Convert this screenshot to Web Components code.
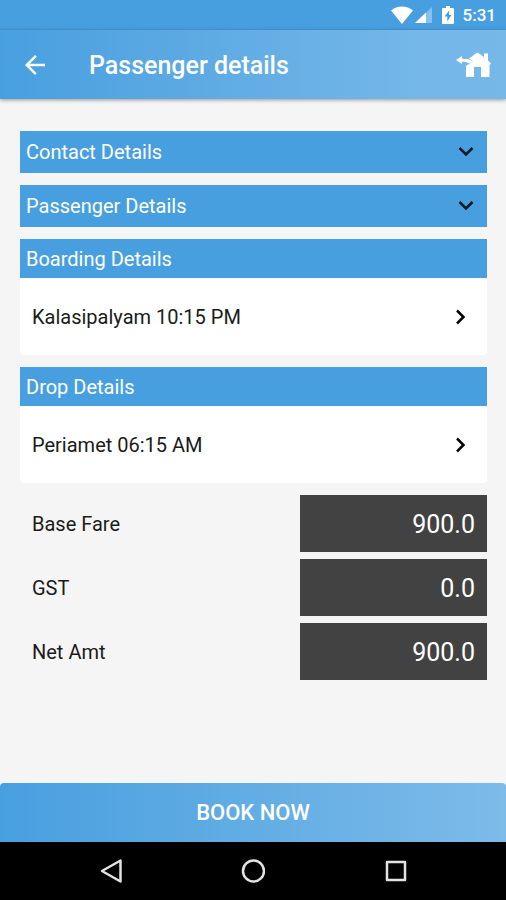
<!DOCTYPE html>
<html lang="en">
<head>
    <meta charset="UTF-8">
    <meta name="viewport" content="width=device-width, initial-scale=1.0">
    <title>Passenger details</title>
    <style>
        :root {
            --primary: #489fdf;
            --primary-light: #7dbbe9;
            --page: #f5f5f5;
            --dark: #424242;
        }

        body {
            margin: 0;
            font-family: Roboto, "Liberation Sans", sans-serif;
            font-size: 20px;
            line-height: 24px;
            color: #1b1b1b;
            background-color: var(--page);
        }
    </style>
</head>
<body>
    <booking-page></booking-page>

    <script>
        class StatusBar extends HTMLElement {

            constructor() {
                super();
                this.shadowDOM = this.attachShadow({mode: "open"});
            }

            connectedCallback() {
                this.render();
            }

            render() {
                this.shadowDOM.innerHTML = `
                <style>
                :host {
                    display: flex;
                    align-items: center;
                    justify-content: flex-end;
                    height: 30px;
                    padding: 0 10px;
                    background-color: var(--primary);
                    color: white;
                    font-size: 17px;
                    font-weight: 500;
                }

                svg {
                    display: block;
                    fill: white;
                }

                .battery {
                    margin: 0 9px 0 10px;
                }
                </style>

                <svg width="22" height="18" viewBox="0 0 22 18" aria-hidden="true">
                    <path d="M0 4.500C6 -.8 16 -.8 22 4.500L11 18z"/>
                </svg>
                <svg width="19" height="18" viewBox="0 0 19 18" aria-hidden="true">
                    <path d="M2 17L19 1v16z" opacity=".35"/>
                    <path d="M2 17L13 6.600V17z"/>
                </svg>
                <svg class="battery" width="12" height="18" viewBox="0 0 12 18" aria-hidden="true">
                    <path fill-rule="evenodd" d="M4 0h4v2h3q1 0 1 1v14q0 1-1 1H1q-1 0-1-1V3q0-1 1-1h3zM7 4.500L2.500 10.500H5.300V15.500L9.500 9H7z"/>
                </svg>
                <time>5:31</time>
                `;
            }
        }

        customElements.define("status-bar", StatusBar);


        class AppHeader extends HTMLElement {

            constructor() {
                super();
                this.shadowDOM = this.attachShadow({mode: "open"});
            }

            connectedCallback() {
                this.render();
            }

            render() {
                this.shadowDOM.innerHTML = `
                <style>
                :host {
                    display: flex;
                    align-items: center;
                    height: 69px;
                    padding: 0 14px 0 20px;
                    background: linear-gradient(to right, var(--primary), #73b6e8 80%, #76b8e8);
                    box-shadow: 0 1px 4px rgba(0, 0, 0, 0.4);
                    color: white;
                }

                button {
                    display: flex;
                    align-items: center;
                    padding: 0;
                    border: none;
                    background: none;
                    color: white;
                    cursor: pointer;
                }

                h1 {
                    flex: 1;
                    margin: 2px 0 0 39px;
                    font-size: 25px;
                    font-weight: 500;
                    line-height: 32px;
                }
                </style>

                <button type="button" aria-label="Back">
                    <svg width="30" height="30" viewBox="0 0 24 24" fill="white">
                        <path d="M20 11H7.800l5.600-5.600L12 4l-8 8 8 8 1.400-1.400L7.800 13H20z"/>
                    </svg>
                </button>
                <h1><slot></slot></h1>
                <button type="button" aria-label="Home">
                    <svg width="36" height="26" viewBox="0 0 36 26" fill="white">
                        <path d="M0 8L6 4V6.800L12 7 17 9.500 13 11.500 10 10 6 9.500V12z"/>
                        <path d="M13 6.500L20.500 1Q21.500 .5 22.500 1L28 5V1.500H32V8.500L35 11.500 33.500 13V25H25V15H18V25H10V14L17 9.500z"/>
                    </svg>
                </button>
                `;
            }
        }

        customElements.define("app-header", AppHeader);


        class AccordionBar extends HTMLElement {

            constructor() {
                super();
                this.shadowDOM = this.attachShadow({mode: "open"});
            }

            connectedCallback() {
                this.render();
            }

            render() {
                this.shadowDOM.innerHTML = `
                <style>
                :host {
                    display: block;
                }

                button {
                    display: flex;
                    align-items: center;
                    justify-content: space-between;
                    width: 100%;
                    height: 42px;
                    padding: 0 13px 0 6px;
                    border: none;
                    background-color: var(--primary);
                    color: white;
                    font: inherit;
                    cursor: pointer;
                }
                </style>

                <button type="button" aria-expanded="false">
                    <slot></slot>
                    <svg width="16" height="12" viewBox="0 0 16 12" fill="none" stroke="#0c1a26" stroke-width="2.500" aria-hidden="true">
                        <path d="M1.500 2L8 8.500 14.500 2"/>
                    </svg>
                </button>
                `;
            }
        }

        customElements.define("accordion-bar", AccordionBar);


        class StopCard extends HTMLElement {

            constructor() {
                super();
                this.shadowDOM = this.attachShadow({mode: "open"});
            }

            connectedCallback() {
                this.render();
            }

            render() {
                this.shadowDOM.innerHTML = `
                <style>
                :host {
                    display: block;
                }

                h2 {
                    margin: 0;
                    padding: 8px 6px 7px;
                    background-color: var(--primary);
                    color: white;
                    font-size: 20px;
                    font-weight: 400;
                    line-height: 24px;
                }

                button {
                    display: flex;
                    align-items: center;
                    justify-content: space-between;
                    width: 100%;
                    height: 77px;
                    padding: 0 21px 0 12px;
                    border: none;
                    border-radius: 0 0 4px 4px;
                    background-color: white;
                    color: inherit;
                    font: inherit;
                    cursor: pointer;
                }
                </style>

                <h2>${this.getAttribute("heading")}</h2>
                <button type="button">
                    <slot></slot>
                    <svg width="11" height="16" viewBox="0 0 11 16" fill="none" stroke="black" stroke-width="2.500" aria-hidden="true">
                        <path d="M2 1.500L8.500 8 2 14.500"/>
                    </svg>
                </button>
                `;
            }
        }

        customElements.define("stop-card", StopCard);


        class FareRow extends HTMLElement {

            constructor() {
                super();
                this.shadowDOM = this.attachShadow({mode: "open"});
            }

            connectedCallback() {
                this.render();
            }

            render() {
                this.shadowDOM.innerHTML = `
                <style>
                :host {
                    display: flex;
                    align-items: center;
                }

                label {
                    width: 60%;
                    padding-left: 12px;
                    box-sizing: border-box;
                }

                output {
                    flex: 1;
                    padding: 14px 12px 11px;
                    background-color: var(--dark);
                    color: white;
                    font-size: 25px;
                    line-height: 32px;
                    text-align: right;
                }
                </style>

                <label for="amount">${this.getAttribute("label")}</label>
                <output id="amount"><slot></slot></output>
                `;
            }
        }

        customElements.define("fare-row", FareRow);


        class BookButton extends HTMLElement {

            constructor() {
                super();
                this.shadowDOM = this.attachShadow({mode: "open"});
            }

            connectedCallback() {
                this.render();
            }

            render() {
                this.shadowDOM.innerHTML = `
                <style>
                :host {
                    display: block;
                }

                button {
                    display: block;
                    width: 100%;
                    height: 59px;
                    padding: 0;
                    border: none;
                    border-radius: 4px 4px 0 0;
                    background: linear-gradient(to right, var(--primary), var(--primary-light));
                    color: white;
                    font: inherit;
                    font-size: 22px;
                    font-weight: 500;
                    cursor: pointer;
                }
                </style>

                <button type="button"><slot></slot></button>
                `;
            }
        }

        customElements.define("book-button", BookButton);


        class NavBar extends HTMLElement {

            constructor() {
                super();
                this.shadowDOM = this.attachShadow({mode: "open"});
            }

            connectedCallback() {
                this.render();
            }

            render() {
                this.shadowDOM.innerHTML = `
                <style>
                :host {
                    display: flex;
                    align-items: center;
                    justify-content: center;
                    gap: 118px;
                    height: 58px;
                    background-color: black;
                }

                button {
                    padding: 0;
                    border: none;
                    background: none;
                    cursor: pointer;
                }

                svg {
                    display: block;
                    fill: none;
                    stroke: #e2e2e2;
                    stroke-width: 2.500;
                    stroke-linejoin: round;
                }
                </style>

                <button type="button" aria-label="Back">
                    <svg width="24" height="24" viewBox="0 0 24 24"><path d="M21.500 1.500V22.500L3 12z"/></svg>
                </button>
                <button type="button" aria-label="Home">
                    <svg width="24" height="24" viewBox="0 0 24 24"><circle cx="12.500" cy="12" r="10.500"/></svg>
                </button>
                <button type="button" aria-label="Recent apps">
                    <svg width="24" height="24" viewBox="0 0 24 24"><path d="M4 3H22V21H4z"/></svg>
                </button>
                `;
            }
        }

        customElements.define("nav-bar", NavBar);


        class BookingPage extends HTMLElement {

            constructor() {
                super();
                this.shadowDOM = this.attachShadow({mode: "open"});
            }

            connectedCallback() {
                this.render();
            }

            render() {
                this.shadowDOM.innerHTML = `
                <style>
                :host {
                    display: flex;
                    flex-direction: column;
                    min-height: 100vh;
                }

                main {
                    flex: 1;
                    display: flex;
                    flex-direction: column;
                    gap: 12px;
                    padding: 32px 19px 32px 20px;
                }

                .fares {
                    display: flex;
                    flex-direction: column;
                    gap: 7px;
                }
                </style>

                <status-bar></status-bar>
                <app-header>Passenger details</app-header>
                <main>
                    <accordion-bar>Contact Details</accordion-bar>
                    <accordion-bar>Passenger Details</accordion-bar>
                    <stop-card heading="Boarding Details">Kalasipalyam 10:15 PM</stop-card>
                    <stop-card heading="Drop Details">Periamet 06:15 AM</stop-card>
                    <div class="fares">
                        <fare-row label="Base Fare">900.0</fare-row>
                        <fare-row label="GST">0.0</fare-row>
                        <fare-row label="Net Amt">900.0</fare-row>
                    </div>
                </main>
                <book-button>BOOK NOW</book-button>
                <nav-bar></nav-bar>
                `;
            }
        }

        customElements.define("booking-page", BookingPage);
    </script>
</body>
</html>
